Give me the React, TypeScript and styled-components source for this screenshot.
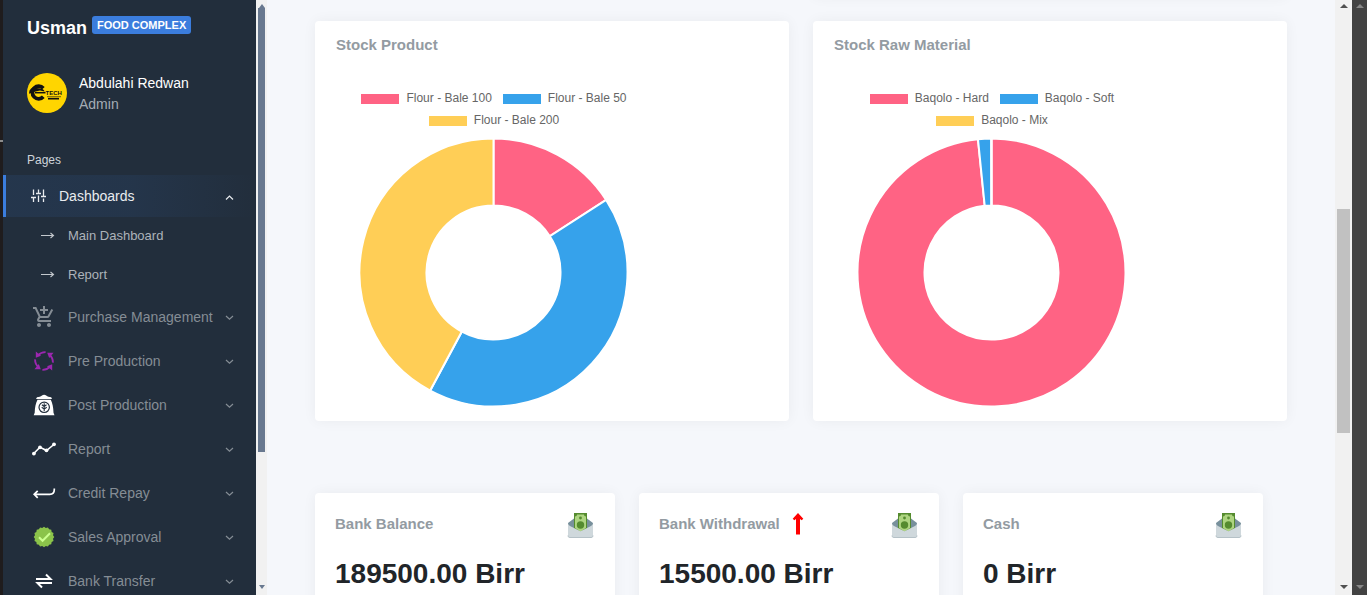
import React from 'react';
import styled, { createGlobalStyle } from 'styled-components';
import { MdOutlineAddShoppingCart } from 'react-icons/md';

const GlobalStyle = createGlobalStyle`
  *, *::before, *::after { box-sizing: border-box; }
  body {
    margin: 0;
    background: #f5f7fb;
    color: #212529;
    font-family: "Liberation Sans", Arial, sans-serif;
    font-size: 14px;
    line-height: 21px;
  }
  h1, h2, p, ul { margin: 0; padding: 0; }
  ul { list-style: none; }
  a { color: inherit; text-decoration: none; }
  svg { display: block; flex: none; }
`;

const Shell = styled.div`
  display: flex;
  height: 100vh;
  overflow: hidden;
`;

const Edge = styled.div`
  flex: 0 0 3px;
  padding-top: 140px;
  background: #1f1c1d;
`;

const EdgeTick = styled.div`
  height: 2px;
  background: #8c8c8c;
`;

const Sidebar = styled.nav`
  flex: 0 0 253px;
  overflow: hidden;
  background: #222e3c;
`;

const Brand = styled.a`
  display: flex;
  align-items: flex-start;
  gap: 5px;
  padding: 16px 24px;
  color: #fff;
  font-size: 18px;
  font-weight: 700;
  line-height: 25px;
`;

const Badge = styled.span`
  padding: 0 5px;
  border-radius: 3px;
  background: #3b7ddd;
  font-size: 11px;
  line-height: 18px;
`;

const User = styled.div`
  display: flex;
  align-items: center;
  gap: 12px;
  padding: 14px 24px;
  color: #fff;
`;

const UserText = styled.div`
  padding-top: 2px;
`;

const Role = styled.div`
  color: #a5acb4;
`;

const NavHeader = styled.div`
  padding: 20px 24px 4px;
  color: #ced4da;
  font-size: 12px;
  line-height: 22px;
`;

const TopLink = styled.a`
  display: flex;
  align-items: center;
  gap: 12px;
  height: 42px;
  padding: 0 20px 0 25px;
  border-left: 3px solid #3b7ddd;
  background: linear-gradient(90deg, rgba(59, 125, 221, 0.1), rgba(59, 125, 221, 0.09) 50%, transparent);
  color: #e9ecef;
`;

const SubLink = styled.a`
  display: flex;
  align-items: center;
  gap: 13px;
  height: 39px;
  padding-left: 37px;
  color: #adb3ba;
  font-size: 13px;
`;

const SubList = styled.ul`
  padding-bottom: 1px;
  margin-top: -1px;
`;

const GroupLink = styled.a`
  display: flex;
  align-items: center;
  gap: 12px;
  height: 44px;
  padding: 0 20px 0 29px;
  color: #858d95;
`;

const Label = styled.span`
  flex: 1;
  min-width: 0;
  white-space: nowrap;
`;

const ScrollTrack = styled.div<{ $size: number; $bg: string; $pad: number }>`
  display: flex;
  flex: 0 0 ${(p) => p.$size}px;
  flex-direction: column;
  align-items: stretch;
  justify-content: space-between;
  padding: 0 ${(p) => p.$pad}px;
  background: ${(p) => p.$bg};
`;

const ScrollArrow = styled.div<{ $down?: boolean; $color: string; $w: number }>`
  align-self: center;
  margin: ${(p) => (p.$down ? '0 0 6px' : '4px 0 0')};
  border: ${(p) => p.$w}px solid transparent;
  border-top: ${(p) => (p.$down ? `4px solid ${p.$color}` : '0')};
  border-bottom: ${(p) => (p.$down ? '0' : `4px solid ${p.$color}`)};
`;

const ScrollLane = styled.div<{ $before: number; $size: number; $after: number }>`
  display: grid;
  flex: 1;
  grid-template-rows: ${(p) => p.$before}fr ${(p) => p.$size}fr ${(p) => p.$after}fr;
`;

const Thumb = styled.div<{ $color: string }>`
  grid-row: 2;
  background: ${(p) => p.$color};
`;

const Main = styled.main`
  flex: 1;
  min-width: 0;
  padding: 0 48px;
  overflow: hidden;
`;

const ChartRow = styled.section`
  display: grid;
  grid-template-columns: 1fr 1fr;
  gap: 24px;
`;

const ScrolledRow = styled(ChartRow)`
  height: 24px;
  margin: -27px 0 24px;
`;

const StatRow = styled.section`
  display: grid;
  grid-template-columns: repeat(3, 1fr);
  gap: 24px;
  padding: 72px 24px 0 0;
`;

const Card = styled.article`
  border-radius: 4px;
  background: #fff;
  box-shadow: 0 0 14px rgba(33, 37, 41, 0.05);
`;

const LastCard = styled(Card)`
  grid-column: 2;
`;

const ChartCard = styled(Card)`
  min-height: 400px;
  padding: 13px 21px;
`;

const CardTitle = styled.h2`
  color: #939ba2;
  font-size: 15px;
  font-weight: 700;
  line-height: 22px;
`;

const Figure = styled.div`
  width: 268px;
  margin: 31px 0 0 24px;
`;

const Legend = styled.ul`
  display: flex;
  flex-wrap: wrap;
  justify-content: center;
  column-gap: 11px;
  margin-bottom: 7px;
  color: #666;
  font-size: 12px;
  line-height: 22px;
`;

const LegendItem = styled.li`
  display: flex;
  align-items: center;
  gap: 7px;
  white-space: nowrap;
`;

const Swatch = styled.span<{ $color: string }>`
  width: 38px;
  height: 10px;
  margin-top: 2px;
  background: ${(p) => p.$color};
`;

const StatCard = styled(Card)`
  min-height: 160px;
  padding: 18px 20px;
`;

const StatHead = styled.div`
  display: flex;
  align-items: center;
  gap: 12px;
  height: 26px;

  & > :last-child { margin-left: auto; }
`;

const Amount = styled.p`
  margin-top: 19px;
  font-size: 28px;
  font-weight: 700;
  line-height: 36px;
`;

const Chevron = ({ up }: { up?: boolean }) => (
  <svg width="13" height="8" viewBox="0 0 13 8" fill="none" stroke={up ? '#e9ecef' : '#858d95'} strokeWidth="1.2">
    <path d={up ? 'M3 7.5 6.5 4 10 7.5' : 'M3 3 6.5 6.2 10 3'} />
  </svg>
);

const SlidersIcon = () => (
  <svg width="16" height="16" viewBox="0 0 16 16" fill="none" stroke="#e9ecef" strokeWidth="1.3">
    <path d="M2.500 1.500V7M2.500 9.500V14M0 9.500h5M7.500 1.500v4M7.500 7.500V14M5 5.500h5M12.500 1.500V8M12.500 10.500V14M10 8.500h5" />
  </svg>
);

const LongArrow = () => (
  <svg width="15" height="9" viewBox="0 0 15 9" fill="none" stroke="#c3c8cd" strokeWidth="1.1">
    <path d="M1 4.500h12.500M10.500 2l3 2.500-3 2.500" />
  </svg>
);

const CycleIcon = () => (
  <svg width="24" height="24" viewBox="0 0 24 24">
    {[0, 90, 180, 270].map((turn) => (
      <g key={turn} transform={`rotate(${turn} 12 12)`}>
        <path d="M6 6.300c2-2.200 4.600-3.300 7.600-3.200" fill="none" stroke="#9c27b0" strokeWidth="1.900" />
        <path d="M3.800 2.500v6.300l5.200-2z" fill="#9c27b0" />
      </g>
    ))}
  </svg>
);

const SackIcon = () => (
  <svg width="24" height="24" viewBox="0 0 24 24" fill="none">
    <path d="M5 4.200c2 0 3.600-.6 5-1.700 1.200-1 3-1 4.200 0 1.400 1.100 3 1.700 5 1.700l.8 1.800H4z" fill="#fff" />
    <path d="M5.500 6.800h13.300c1.700 3.300 2.500 7.400 2.700 12.900l1 2.600H1.700l1-2.600c.2-5.500 1-9.600 2.800-12.900z" fill="#fff" />
    <circle cx="12.200" cy="14.300" r="5.200" stroke="#222e3c" strokeWidth="1.200" />
    <path d="M12.200 10.300v8M12.200 13.500l-2.300-1.700M12.200 13.500l2.300-1.700M12.200 16.100l-2.500-1.800M12.200 16.100l2.500-1.800" stroke="#222e3c" strokeWidth="1.100" />
  </svg>
);

const TrendIcon = () => (
  <svg width="24" height="24" viewBox="0 0 24 24" fill="none" stroke="#fff" strokeWidth="1.600">
    <path d="M1.500 16.800 8 10.300l6.500 3.200 8-6.500" />
    <g fill="#fff" stroke="none">
      <circle cx="1.900" cy="16.600" r="1.900" />
      <circle cx="8" cy="10.300" r="1.900" />
      <circle cx="14.500" cy="13.300" r="1.900" />
      <circle cx="22" cy="7.300" r="1.900" />
    </g>
  </svg>
);

const ReturnIcon = () => (
  <svg width="24" height="24" viewBox="0 0 24 24" fill="none" stroke="#fff" strokeWidth="1.700">
    <path d="M22.300 7.500v1c0 3-1.600 4.800-4.500 4.800H2.500M5.700 9.800 2.200 13.300l3.500 3.500" />
  </svg>
);

const sealPoints = Array.from({ length: 32 }, (_, i) => {
  const r = i % 2 ? 9.2 : 10.3;
  const a = (i * Math.PI) / 16;
  return `${12 + r * Math.sin(a)},${12 - r * Math.cos(a)}`;
}).join(' ');

const SealIcon = () => (
  <svg width="24" height="24" viewBox="0 0 24 24">
    <polygon points={sealPoints} fill="#8bc34a" />
    <path d="m7 12.200 3.600 3.600L18 8.300" fill="none" stroke="#ccff90" strokeWidth="2" />
  </svg>
);

const TransferIcon = () => (
  <svg width="24" height="24" viewBox="0 0 24 24" fill="none" stroke="#fff" strokeWidth="2">
    <path d="M4 10h14.500l-4.500-4.500M20 14H5.500l4.500 4.500" />
  </svg>
);

const CartIcon = () => <MdOutlineAddShoppingCart size={24} color="#858d95" />;

const Avatar = () => (
  <svg width="40" height="40" viewBox="0 0 40 40" role="img" aria-label="Abdulahi Redwan">
    <circle cx="20" cy="20" r="20" fill="#ffd500" />
    <path d="M16.300 15.200a6.300 6.300 0 1 0 0 8.600" fill="none" stroke="#111" strokeWidth="3.800" />
    <path d="M2.500 17.500c2-3.500 6-5 10-4l-3.500 1.500 5 .5c2 .5 3.300 1.500 3.500 3l-4.500-1-5.500 1.300-5.500 2z" fill="#111" />
    <path d="M8 19.700h10.500" stroke="#111" strokeWidth="1.500" />
    <text x="18.500" y="22" fontSize="6" fontWeight="700" fill="#111">TECH</text>
    <path d="M20 23.700h14" stroke="#111" strokeWidth=".6" />
    <path d="M21 25.700h11" stroke="#111" strokeWidth="1.600" />
  </svg>
);

const EnvelopeIcon = () => (
  <svg width="28" height="28" viewBox="0 -3 28 28">
    <path d="M1 10 7 5.500h13l6 4.500v3L13.500 20 1 13z" fill="#78909c" />
    <path d="M7 0h13v16l-6.500 4L7 16z" fill="#558b2f" />
    <path d="M10 1.500h7c0 1.300.8 2 2 2V15l-5.500 3.500L8 15V3.500c1.200 0 2-.7 2-2z" fill="#aed581" />
    <circle cx="13.500" cy="12" r="3.700" fill="#558b2f" />
    <circle cx="13.500" cy="5" r="1.400" fill="#558b2f" />
    <path d="M1 10.300c.3 1.500 1.200 2.200 2 2.700l10.500 5.300L24 13c.8-.5 1.700-1.200 2-2.700V23c0 1.200-.8 2-2 2H3c-1.200 0-2-.8-2-2z" fill="#cfd8dc" />
    <path d="M1 22.500c0 1.200.8 2 2 2h21c1.200 0 2-.8 2-2" fill="none" stroke="#b5c1c7" />
  </svg>
);

const UpArrow = () => (
  <svg width="12" height="22" viewBox="0 0 12 22">
    <path d="M6 0 11.300 5.800 9.700 7.300 8 6v15.500H4V6L2.300 7.300.7 5.800z" fill="red" />
  </svg>
);

type Slice = { label: string; color: string; from: number; to: number };

const polar = (r: number, deg: number) => {
  const a = (deg * Math.PI) / 180;
  return `${133.5 + r * Math.sin(a)} ${134.5 - r * Math.cos(a)}`;
};

const slicePath = ({ from, to }: Slice) => {
  const large = to - from > 180 ? 1 : 0;
  return `M${polar(134, from)}A134 134 0 ${large} 1 ${polar(134, to)}L${polar(67, to)}A67 67 0 ${large} 0 ${polar(67, from)}Z`;
};

const Doughnut = ({ title, slices }: { title: string; slices: Slice[] }) => (
  <ChartCard>
    <CardTitle>{title}</CardTitle>
    <Figure>
      <Legend>
        {slices.map((s) => (
          <LegendItem key={s.label}>
            <Swatch $color={s.color} />
            {s.label}
          </LegendItem>
        ))}
      </Legend>
      <svg width="268" height="269" viewBox="0 0 268 269" role="img" aria-label={title}>
        {slices.map((s) => (
          <path key={s.label} d={slicePath(s)} fill={s.color} stroke="#fff" strokeWidth="2" />
        ))}
      </svg>
    </Figure>
  </ChartCard>
);

const PINK = '#ff6384';
const BLUE = '#36a2eb';
const YELLOW = '#ffce56';

const products: Slice[] = [
  { label: 'Flour - Bale 100', color: PINK, from: 0, to: 57.2 },
  { label: 'Flour - Bale 50', color: BLUE, from: 57.2, to: 208.2 },
  { label: 'Flour - Bale 200', color: YELLOW, from: 208.2, to: 360 },
];

const materials: Slice[] = [
  { label: 'Baqolo - Hard', color: PINK, from: 0, to: 354.2 },
  { label: 'Baqolo - Soft', color: BLUE, from: 354.2, to: 359.9 },
  { label: 'Baqolo - Mix', color: YELLOW, from: 359.9, to: 360 },
];

const groups = [
  { label: 'Purchase Management', Icon: CartIcon },
  { label: 'Pre Production', Icon: CycleIcon },
  { label: 'Post Production', Icon: SackIcon },
  { label: 'Report', Icon: TrendIcon },
  { label: 'Credit Repay', Icon: ReturnIcon },
  { label: 'Sales Approval', Icon: SealIcon },
  { label: 'Bank Transfer', Icon: TransferIcon },
];

const stats = [
  { label: 'Bank Balance', amount: '189500.00 Birr', rising: false },
  { label: 'Bank Withdrawal', amount: '15500.00 Birr', rising: true },
  { label: 'Cash', amount: '0 Birr', rising: false },
];

type ScrollProps = {
  size: number; pad: number; bg: string; arrow: string; arrowSize: number;
  thumb?: string; parts?: [number, number, number];
};

const Scroll = ({ size, pad, bg, arrow, arrowSize, thumb = 'transparent', parts = [0, 1, 0] }: ScrollProps) => (
  <ScrollTrack $size={size} $pad={pad} $bg={bg} aria-hidden="true">
    <ScrollArrow $color={arrow} $w={arrowSize} />
    <ScrollLane $before={parts[0]} $size={parts[1]} $after={parts[2]}>
      <Thumb $color={thumb} />
    </ScrollLane>
    <ScrollArrow $down $color={arrow} $w={arrowSize} />
  </ScrollTrack>
);

export default function App() {
  return (
    <>
      <GlobalStyle />
      <Shell>
        <Edge><EdgeTick /></Edge>
        <Sidebar>
          <Brand href="#">
            Usman <Badge>FOOD COMPLEX</Badge>
          </Brand>
          <User>
            <Avatar />
            <UserText>
              Abdulahi Redwan
              <Role>Admin</Role>
            </UserText>
          </User>
          <NavHeader>Pages</NavHeader>
          <ul>
            <li>
              <TopLink href="#">
                <SlidersIcon />
                <Label>Dashboards</Label>
                <Chevron up />
              </TopLink>
              <SubList>
                <li><SubLink href="#"><LongArrow />Main Dashboard</SubLink></li>
                <li><SubLink href="#"><LongArrow />Report</SubLink></li>
              </SubList>
            </li>
            {groups.map(({ label, Icon }) => (
              <li key={label}>
                <GroupLink href="#">
                  <Icon />
                  <Label>{label}</Label>
                  <Chevron />
                </GroupLink>
              </li>
            ))}
          </ul>
        </Sidebar>
        <Scroll size={11} pad={2} bg="#f1f1f1" arrow="#68788f" arrowSize={3} thumb="#68788f" parts={[0, 77, 23]} />
        <Main>
          <ScrolledRow aria-hidden="true">
            <LastCard />
          </ScrolledRow>
          <ChartRow>
            <Doughnut title="Stock Product" slices={products} />
            <Doughnut title="Stock Raw Material" slices={materials} />
          </ChartRow>
          <StatRow>
            {stats.map((s) => (
              <StatCard key={s.label}>
                <StatHead>
                  <CardTitle>{s.label}</CardTitle>
                  {s.rising && <UpArrow />}
                  <EnvelopeIcon />
                </StatHead>
                <Amount>{s.amount}</Amount>
              </StatCard>
            ))}
          </StatRow>
        </Main>
        <Scroll size={17} pad={2} bg="#f1f1f1" arrow="#505050" arrowSize={4} thumb="#c1c1c1" parts={[201, 224, 152]} />
        <Scroll size={15} pad={2} bg="#424242" arrow="#868686" arrowSize={4} />
      </Shell>
    </>
  );
}
